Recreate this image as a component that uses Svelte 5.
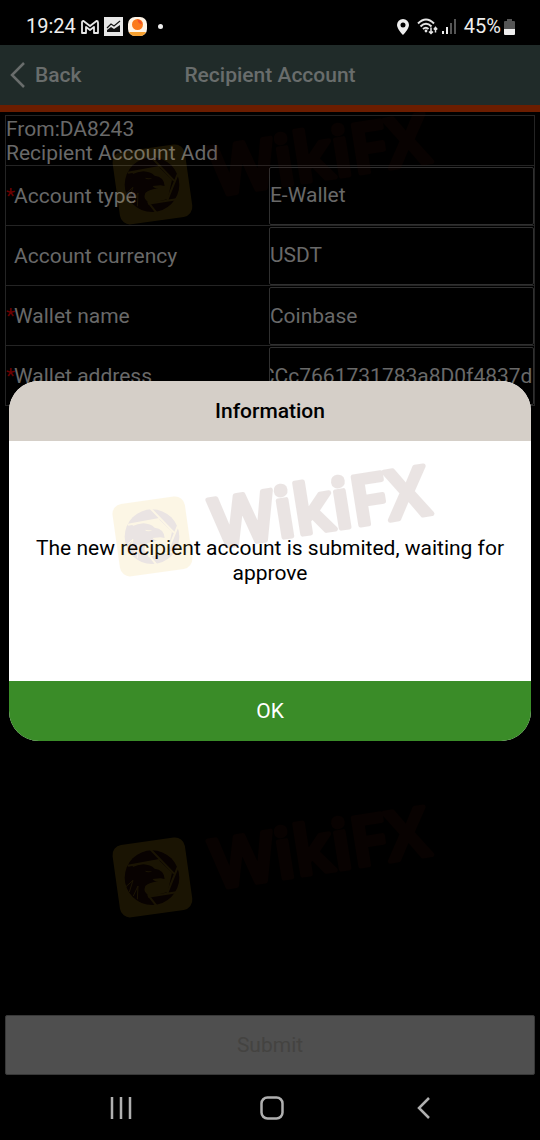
<script lang="ts">
	import { onMount } from 'svelte';

	let accountType = $state('E-Wallet');
	let currency = $state('USDT');
	let walletName = $state('Coinbase');
	let walletAddress = $state('CCc7661731783a8D0f4837d');
	let open = $state(true);
	let addressInput: HTMLInputElement;

	onMount(() => {
		// keep the end of a long address in view
		addressInput.scrollLeft = addressInput.scrollWidth;
	});
</script>

<div class="phone">
	<div class="status">
		<span class="clock">19:24</span>
		<svg class="gmail" width="18" height="14" viewBox="0 0 18 14">
			<path d="M1 2.5Q1 1 2.5 1L9 6L15.5 1Q17 1 17 2.5V13H13V7L9 10L5 7V13H1Z" fill="none" stroke="#e8e8e8" stroke-width="1.8" stroke-linejoin="round" />
		</svg>
		<svg class="chart" width="19" height="19" viewBox="0 0 19 19">
			<rect width="19" height="19" fill="#e8e8e8" />
			<path d="M3 11L7 7L10 9L16 4" fill="none" stroke="#111" stroke-width="1.2" />
			<path d="M3 15V13L7 10L10 12L16 8V15Z" fill="#111" />
		</svg>
		<svg class="orange" width="19" height="19" viewBox="0 0 19 19">
			<rect width="19" height="19" rx="7" fill="#fff5e8" />
			<path d="M1 15H18Q16 19 12 19H7Q3 19 1 15Z" fill="#f5a030" />
			<circle cx="9.5" cy="7.5" r="5.5" fill="#fb7a1c" />
			<path d="M9.5 2.5A5.5 5.5 0 0 1 14 7Q10 7 9.5 2.5Z" fill="#f1502a" />
		</svg>
		<span class="dot"></span>
		<svg class="pin" width="12" height="16" viewBox="0 0 12 16">
			<path d="M6 0A6 6 0 0 0 0 6C0 10 6 16 6 16S12 10 12 6A6 6 0 0 0 6 0ZM6 3.5A2.5 2.5 0 1 1 6 8.5A2.5 2.5 0 0 1 6 3.5Z" fill="#eee" fill-rule="evenodd" />
		</svg>
		<svg class="wifi" width="21" height="17" viewBox="0 0 21 17">
			<g fill="none" stroke="#e4e4e4" stroke-width="2">
				<path d="M1 5.5Q9 -2.5 17 5.5" />
				<path d="M3.5 8.5Q9 3 14.5 8.5" />
				<path d="M6 11Q9 8.5 11.5 11" />
				<path d="M14 9.5V15.5M12 13.5L14 15.5L16 13.5M18.5 14.5V9.5M16.8 11.5L18.5 9.5L20.2 11.5" stroke-width="1.5" />
			</g>
			<circle cx="9" cy="13" r="1.4" fill="#e4e4e4" />
		</svg>
		<svg class="signal" width="15" height="15" viewBox="0 0 15 15">
			<path d="M0 12H2V15H0ZM4 8H6V15H4Z" fill="#eee" />
			<path d="M8 4H10V15H8ZM12 0H14V15H12Z" fill="#555" />
		</svg>
		<span>45%</span>
		<svg class="battery" width="11" height="16" viewBox="0 0 11 16">
			<path d="M3 0H8V2H10Q11 2 11 3V10H0V3Q0 2 1 2H3Z" fill="#555" />
			<path d="M0 10H11V15Q11 16 10 16H1Q0 16 0 15Z" fill="#eee" />
		</svg>
	</div>

	<div class="app">
		<header>
			<button class="back">
				<svg width="16" height="28" viewBox="0 0 16 28">
					<path d="M14 2L2 14L14 26" fill="none" stroke="#696d6c" stroke-width="2.5" />
				</svg>
				Back
			</button>
			<h1>Recipient Account</h1>
		</header>

		<form>
			<table>
				<colgroup>
					<col class="labels" />
					<col />
				</colgroup>
				<tbody>
					<tr class="intro">
						<td colspan="2">From:DA8243<br />Recipient Account Add</td>
					</tr>
					<tr>
						<td class="label"><span class="star">*</span><label for="type">Account type</label></td>
						<td class="field">
							<select id="type" bind:value={accountType}>
								<option>E-Wallet</option>
							</select>
						</td>
					</tr>
					<tr>
						<td class="label"><span class="star"></span><label for="currency">Account currency</label></td>
						<td class="field">
							<select id="currency" bind:value={currency}>
								<option>USDT</option>
							</select>
						</td>
					</tr>
					<tr>
						<td class="label"><span class="star">*</span><label for="name">Wallet name</label></td>
						<td class="field"><input id="name" type="text" bind:value={walletName} /></td>
					</tr>
					<tr>
						<td class="label"><span class="star">*</span><label for="address">Wallet address</label></td>
						<td class="field">
							<input id="address" type="text" bind:value={walletAddress} bind:this={addressInput} />
						</td>
					</tr>
				</tbody>
			</table>
			<button class="submit" type="button">Submit</button>
		</form>

		{#if open}
			<div class="overlay">
				<div class="dialog" role="dialog" aria-labelledby="dialog-title">
					<h2 id="dialog-title">Information</h2>
					<p>The new recipient account is submited, waiting for approve</p>
					<button class="ok" onclick={() => (open = false)}>OK</button>
				</div>
			</div>
		{/if}
	</div>

	<nav>
		<button aria-label="Recent apps">
			<svg width="22" height="22" viewBox="0 0 22 22">
				<path d="M2 0V22M11 0V22M20 0V22" stroke="#b0b0b0" stroke-width="2.5" />
			</svg>
		</button>
		<button aria-label="Home">
			<svg width="24" height="24" viewBox="0 0 24 24">
				<rect x="1.5" y="1.5" width="21" height="21" rx="6" fill="none" stroke="#b0b0b0" stroke-width="2.5" />
			</svg>
		</button>
		<button aria-label="Back">
			<svg width="14" height="22" viewBox="0 0 14 22">
				<path d="M12 1L2 11L12 21" fill="none" stroke="#b0b0b0" stroke-width="2.5" />
			</svg>
		</button>
	</nav>

	{#each ['top', 'middle', 'bottom'] as place}
		<svg class="watermark {place}" width="350" height="140" viewBox="0 0 350 140" aria-hidden="true">
			<g transform="rotate(-8 52 87)">
				<rect x="16" y="50" width="73" height="73" rx="10" fill="#ecb41e" />
			</g>
			<g transform="scale(0.3333)">
				<circle cx="156" cy="260" r="82" fill="#48140a" />
				<path d="M96 221L176 207L216 245L203 303L148 317L133 300Z" fill="#ecb41e" />
				<path d="M84 224L178 207M152 176L222 248M240 212L202 306M234 303L144 317M172 348L144 312" stroke="#ecb41e" stroke-width="6" />
				<path d="M76 250Q94 222 130 220Q152 221 164 233Q192 236 194 264L181 262L158 264Q161 271 175 271Q148 274 136 285Q128 301 145 338L118 332L84 298Z" fill="#48140a" />
				<path d="M134 239Q143 248 157 241Q145 241 134 239Z" fill="#ecb41e" />
				<path d="M78 287L99 268L88 303M100 315L114 285L112 325" fill="none" stroke="#ecb41e" stroke-width="3" />
			</g>
			<text x="115" y="98" transform="rotate(-9 115 98)">WikiFX</text>
		</svg>
	{/each}
</div>

<style>
	:global(body) {
		margin: 0;
		background: #000;
	}
	.phone {
		position: relative;
		display: flex;
		flex-direction: column;
		min-height: 100vh;
		background: #000;
		color: #696969;
		font-family: Roboto, sans-serif;
		font-size: 21px;
		line-height: 25px;
	}
	button,
	input,
	select {
		font: inherit;
		color: inherit;
		border: 0;
		border-radius: 0;
		margin: 0;
		padding: 0;
		background: none;
		appearance: none;
	}
	.status {
		display: flex;
		align-items: center;
		height: 45px;
		box-sizing: border-box;
		padding: 8px 25px 0 26px;
		color: #eee;
		font-size: 20px;
	}
	.clock {
		margin-right: 5px;
	}
	.chart {
		margin: 0 5px;
	}
	.dot {
		width: 5px;
		height: 5px;
		margin-left: 11px;
		border-radius: 50%;
		background: #eee;
	}
	.pin {
		margin-left: auto;
	}
	.wifi {
		margin: 0 4px 0 8px;
	}
	.signal {
		margin-right: 7px;
	}
	.battery {
		margin-left: 3px;
	}
	.app {
		position: relative;
		flex: 1;
		display: flex;
		flex-direction: column;
	}
	header {
		display: grid;
		grid-template-columns: 1fr auto 1fr;
		align-items: center;
		height: 60px;
		background: #202b29;
		border-bottom: 7px solid #6b1d00;
		color: #696d6c;
	}
	h1 {
		margin: 0;
		font-size: 21px;
		font-weight: 500;
	}
	.back {
		display: flex;
		align-items: center;
		gap: 9px;
		padding-left: 10px;
		font-weight: 500;
	}
	form {
		flex: 1;
		display: flex;
		flex-direction: column;
		justify-content: space-between;
		padding: 3px 5px 0;
	}
	table {
		width: 100%;
		table-layout: fixed;
		border: 1px solid #242424;
		border-collapse: collapse;
	}
	.labels {
		width: 49.8%;
	}
	tr {
		height: 60px;
	}
	.intro {
		height: 50px;
		line-height: 24px;
	}
	td {
		box-sizing: border-box;
		padding: 0;
		border-bottom: 1px solid #242424;
	}
	.label {
		padding-top: 2px;
	}
	.star {
		display: inline-block;
		width: 8px;
		color: #6b0000;
	}
	.field input,
	.field select {
		display: block;
		width: 100%;
		height: 58px;
		box-sizing: border-box;
		border: 1px solid #303030;
		border-radius: 2px;
	}
	.submit {
		height: 60px;
		border: 1px solid #383838;
		border-radius: 2px;
		background: #4f4f4f;
		color: #444341;
	}
	.overlay {
		position: absolute;
		inset: 0;
		display: flex;
		align-items: center;
		justify-content: center;
		padding: 2px 9px 0;
	}
	.dialog {
		display: flex;
		flex-direction: column;
		width: 100%;
		overflow: hidden;
		border-radius: 30px;
		background: #fff;
		color: #000;
		text-align: center;
	}
	h2 {
		margin: 0;
		background: #d5cfc8;
		font-size: 21px;
		font-weight: 500;
		line-height: 60px;
	}
	p {
		display: flex;
		align-items: center;
		justify-content: center;
		min-height: 240px;
		margin: 0;
		padding: 0 16px;
	}
	.ok {
		height: 60px;
		background: #3a8c28;
		color: #fff;
	}
	nav {
		display: grid;
		grid-template-columns: repeat(3, 1fr);
		height: 65px;
		padding: 0 40px 0 45px;
	}
	nav button {
		display: flex;
		align-items: center;
		justify-content: center;
	}
	.watermark {
		position: absolute;
		left: 100px;
		overflow: visible;
		opacity: 0.11;
		pointer-events: none;
	}
	.top {
		top: 98px;
	}
	.middle {
		top: 450px;
	}
	.bottom {
		top: 791px;
	}
	.watermark text {
		fill: #48140a;
		stroke: #48140a;
		stroke-width: 5px;
		stroke-linejoin: round;
		font-family: "Open Sans", sans-serif;
		font-size: 68px;
		font-weight: 600;
	}
</style>
